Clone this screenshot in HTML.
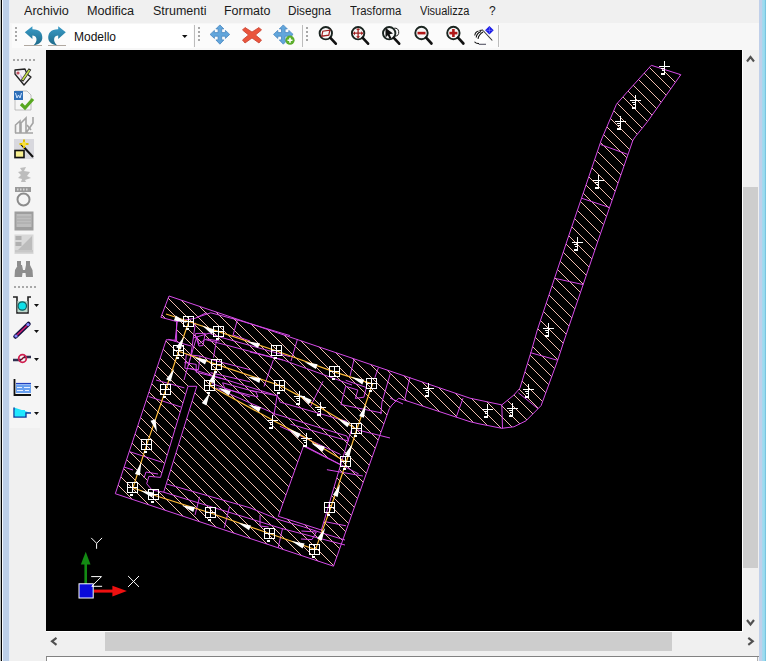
<!DOCTYPE html>
<html><head><meta charset="utf-8">
<style>
*{margin:0;padding:0;box-sizing:border-box}
html,body{width:766px;height:661px;overflow:hidden;background:#f0f0f0;font-family:"Liberation Sans",sans-serif;font-size:12px;color:#000}
.a{position:absolute}
#frameL0{left:0;top:0;width:1px;height:661px;background:#b8bcb8}
#frameL1{left:1px;top:0;width:1px;height:661px;background:#000}
#frameL2{left:2px;top:0;width:1px;height:661px;background:#f4f9ff}
#frameL3{left:3px;top:0;width:6px;height:661px;background:#bccfe8}
#frameL4{left:9px;top:0;width:1px;height:661px;background:#e6eef8}
#menu{left:10px;top:0;width:749px;height:23px;background:#f0f0f0}
.mi{position:absolute;top:4px;font-size:12px;line-height:15px;white-space:nowrap;transform-origin:0 0;color:#1a1a1a}
#tbarea{left:10px;top:23px;width:749px;height:27px;background:#f7f7f7}
#tb{left:12px;top:24px;width:488px;height:24px;background:#fbfbfb}
#ltb{left:10px;top:50px;width:30px;height:378px;background:#f5f5f5}
#canvas{left:46px;top:50px;width:696px;height:581px;background:#000;overflow:hidden}
#frameR1{left:759px;top:0;width:3px;height:661px;background:#c0d0ea}
#frameR2{left:762px;top:0;width:4px;height:661px;background:linear-gradient(90deg,#a8d8ee,#98dcf0 60%,#6ab8d8)}
</style></head><body>
<div class="a" id="frameL0"></div><div class="a" id="frameL1"></div><div class="a" id="frameL2"></div><div class="a" id="frameL3"></div><div class="a" id="frameL4"></div>
<div class="a" id="menu"></div>
<div class="mi" style="left:24px;transform:scaleX(1.05)">Archivio</div><div class="mi" style="left:87px;transform:scaleX(1.055)">Modifica</div><div class="mi" style="left:153px;transform:scaleX(1.04)">Strumenti</div><div class="mi" style="left:224px;transform:scaleX(1.04)">Formato</div><div class="mi" style="left:288px;transform:scaleX(0.98)">Disegna</div><div class="mi" style="left:350px;transform:scaleX(0.945)">Trasforma</div><div class="mi" style="left:420px;transform:scaleX(0.917)">Visualizza</div><div class="mi" style="left:489px">?</div>

<div class="a" id="tbarea"></div>
<div class="a" id="tb"></div>
<div class="a" id="ltb"></div>
<svg class="a" style="left:0;top:0" width="766" height="50" viewBox="0 0 766 50">
<g fill="#a8a8a8"><rect x="15" y="27" width="2" height="2"/><rect x="15" y="31" width="2" height="2"/><rect x="15" y="35" width="2" height="2"/><rect x="15" y="39" width="2" height="2"/>
<rect x="198" y="27" width="2" height="2"/><rect x="198" y="31" width="2" height="2"/><rect x="198" y="35" width="2" height="2"/><rect x="198" y="39" width="2" height="2"/>
<rect x="306" y="27" width="2" height="2"/><rect x="306" y="31" width="2" height="2"/><rect x="306" y="35" width="2" height="2"/><rect x="306" y="39" width="2" height="2"/></g>
<rect x="70" y="24" width="123" height="24" fill="#fff"/>
<line x1="194.5" y1="25" x2="194.5" y2="47" stroke="#bdbdbd"/>
<line x1="302.5" y1="25" x2="302.5" y2="47" stroke="#bdbdbd"/>
<line x1="498.5" y1="25" x2="498.5" y2="47" stroke="#bdbdbd"/>
<defs><linearGradient id="ug" x1="0" y1="0" x2="0" y2="1"><stop offset="0" stop-color="#3a9cc8"/><stop offset="1" stop-color="#1d6a8a"/></linearGradient></defs>
<rect x="24" y="45" width="18" height="1" fill="#b0a8a0"/><rect x="48" y="45" width="18" height="1" fill="#b0a8a0"/>
<path d="M24.8,32.2 L32.4,26.2 L32.4,29.3 C39.8,29.2 42.8,33.4 42.3,38.6 C41.8,42.6 38.2,44.9 33.6,45.3 C35.6,43.2 37,40.6 36.4,38.4 C35.8,36.2 34.4,35.4 32.4,35.4 L32.4,38.9 Z" fill="url(#ug)"/>
<path d="M65.8,32.2 L58.2,26.2 L58.2,29.3 C50.8,29.2 47.8,33.4 48.3,38.6 C48.8,42.6 52.4,44.9 57.0,45.3 C55.0,43.2 53.6,40.6 54.2,38.4 C54.8,36.2 56.2,35.4 58.2,35.4 L58.2,38.9 Z" fill="url(#ug)"/>
<path d="M182,35 H187.5 L184.75,38 Z" fill="#111"/>
<path d="M219.9,24.9 L223.9,28.9 L221.70000000000002,28.9 L221.70000000000002,32.6 L225.4,32.6 L225.4,30.4 L229.70000000000002,34.4 L225.4,38.4 L225.4,36.199999999999996 L221.70000000000002,36.199999999999996 L221.70000000000002,39.9 L223.9,39.9 L219.9,44.2 L215.9,39.9 L218.1,39.9 L218.1,36.199999999999996 L214.4,36.199999999999996 L214.4,38.4 L210.1,34.4 L214.4,30.4 L214.4,32.6 L218.1,32.6 L218.1,28.9 L215.9,28.9 Z" fill="#62a6dc" stroke="#4a88c0" stroke-width="0.8" stroke-linejoin="round"/>
<path d="M245,27.5 L252,32 L259,27.5 L261.5,30 L255.5,35 L261.5,40 L259,43 L252,38 L245,43 L242.5,40 L248.5,35 L242.5,30 Z" fill="#ea553c" stroke="#c84030" stroke-width="0.8" stroke-linejoin="round"/>
<path d="M283.3,24.9 L287.3,28.9 L285.1,28.9 L285.1,32.6 L288.8,32.6 L288.8,30.4 L293.1,34.4 L288.8,38.4 L288.8,36.199999999999996 L285.1,36.199999999999996 L285.1,39.9 L287.3,39.9 L283.3,44.2 L279.3,39.9 L281.5,39.9 L281.5,36.199999999999996 L277.8,36.199999999999996 L277.8,38.4 L273.5,34.4 L277.8,30.4 L277.8,32.6 L281.5,32.6 L281.5,28.9 L279.3,28.9 Z" fill="#62a6dc" stroke="#4a88c0" stroke-width="0.8" stroke-linejoin="round"/>
<circle cx="290" cy="40.2" r="4.6" fill="#5cae2c"/><path d="M287.5,40.2 H292.5 M290,37.7 V42.7" stroke="#fff" stroke-width="1.6"/>
<g><circle cx="325.8" cy="33.2" r="6.2" fill="#f6f6f6" stroke="#1a2420" stroke-width="1.9"/><line x1="330.40000000000003" y1="37.800000000000004" x2="335.8" y2="43.7" stroke="#111" stroke-width="2.6" stroke-linecap="round"/><path d="M321.8,36.2 L322.8,31.200000000000003 L329.8,30.200000000000003 L328.8,35.2 Z" fill="none" stroke="#a02020" stroke-width="1.2"/></g><g><circle cx="358.1" cy="33.2" r="6.2" fill="#f6f6f6" stroke="#1a2420" stroke-width="1.9"/><line x1="362.70000000000005" y1="37.800000000000004" x2="368.1" y2="43.7" stroke="#111" stroke-width="2.6" stroke-linecap="round"/><path d="M354.1,33.2 H362.1 M358.1,29.2 V37.2" stroke="#a02020" stroke-width="1.3"/><path d="M352.8,33.2 L355,31.2 V35.2 Z M363.4,33.2 L361.2,31.2 V35.2 Z M358.1,27.9 L356.1,30.1 H360.1 Z M358.1,38.5 L356.1,36.3 H360.1 Z" fill="#a02020"/></g><g><circle cx="389.2" cy="33.2" r="6.2" fill="#f6f6f6" stroke="#1a2420" stroke-width="1.9"/><line x1="393.8" y1="37.800000000000004" x2="399.2" y2="43.7" stroke="#111" stroke-width="2.6" stroke-linecap="round"/><path d="M385.5,27.8 L393,33.5 L389.6,34.3 L391.5,38.2 L389.6,39 L387.8,35.2 L385.5,37.5 Z" fill="#111"/><path d="M394.2,28.200000000000003 A4,4 0 0 1 395.2,36.2" fill="none" stroke="#222" stroke-width="1"/></g><g><circle cx="421.5" cy="33" r="6.2" fill="#f6f6f6" stroke="#1a2420" stroke-width="1.9"/><line x1="426.1" y1="37.6" x2="431.5" y2="43.5" stroke="#111" stroke-width="2.6" stroke-linecap="round"/><rect x="417.5" y="31.8" width="8" height="2.6" fill="#b01818"/></g><g><circle cx="453.4" cy="33" r="6.2" fill="#f6f6f6" stroke="#1a2420" stroke-width="1.9"/><line x1="458.0" y1="37.6" x2="463.4" y2="43.5" stroke="#111" stroke-width="2.6" stroke-linecap="round"/><rect x="449.4" y="31.8" width="8" height="2.6" fill="#b01818"/><rect x="452.09999999999997" y="29" width="2.6" height="8" fill="#b01818"/></g>
<path d="M475,34 C476,31 480,30 483,30.2 L488.5,37 C488,40 486,43 483,43.5 L479,43.5 L474.5,41.5 C476,40.5 477,40 478,39 C476,38 474.5,36.5 475,34 Z" fill="#fff"/>
<path d="M474.8,35.5 C475,33 476.5,31.5 478.5,31 M476.2,37.5 C476.5,34.5 478.5,32.5 481,31.5 M478,38.8 C478.5,36 480.5,33.5 483,32 M479.5,30.5 L483,30 M474.5,41.8 C475.5,43.3 477,43.6 479,43.6" fill="none" stroke="#111" stroke-width="1.1"/>
<path d="M479,44.3 H486" stroke="#556" stroke-width="1.1"/>
<path d="M483,30.5 L492.3,40.5" stroke="#333" stroke-width="1.1"/>
<path d="M489.4,26 L493.7,30.3 L489.4,34.6 L485.1,30.3 Z" fill="#1818e8"/><path d="M486.4,30.3 H492.4 M489.4,27.3 V33.3" stroke="#8c8cff" stroke-width="0.6"/>
</svg>
<div class="a" style="left:74px;top:30px;font-size:12px;line-height:15px;color:#111">Modello</div>

<div class="a" id="canvas"></div>
<!--CANVAS--><svg class="a" style="left:46px;top:50px" width="696" height="581" viewBox="46 50 696 581">
<defs><clipPath id="hc"><path clip-rule="evenodd" d="M169.0,296.0 L470.0,398.2 L501.8,404.9 L513.9,395.0 L519.9,388.2 L531.3,351.2 L537.3,330.0 L567.3,240.0 L601.3,140.0 L616.5,104.2 L627.8,91.3 L651.3,65.3 L680.8,74.7 L647.5,121.6 L635.4,136.7 L633.0,140.0 L598.3,240.0 L564.3,340.0 L557.7,360.3 L541.1,405.6 L526.0,420.8 L513.9,426.8 L501.8,428.3 L479.0,423.8 L470.0,421.7 L398.7,398.2 L392.0,405.0 L389.3,408.7 L333.5,566.2 L115.3,493.7 L166.3,339.7 L176.6,340.3 L176.6,321.5 L160.9,317.3 Z M188.0,386.3 L196.8,386.3 L163.7,492.2 L152.0,490.0 L146.7,483.7 L148.9,476.3 L160.5,477.4 Z M303.5,446.1 L340.6,464.9 L321.4,530.0 L278.3,516.3 Z"/></clipPath></defs>
<g clip-path="url(#hc)" shape-rendering="crispEdges"><path d="M-644.5,50.5 L-63.5,631.5 M-633.5,50.5 L-52.5,631.5 M-621.5,50.5 L-40.5,631.5 M-610.5,50.5 L-29.5,631.5 M-599.5,50.5 L-18.5,631.5 M-587.5,50.5 L-6.5,631.5 M-576.5,50.5 L4.5,631.5 M-565.5,50.5 L15.5,631.5 M-554.5,50.5 L26.5,631.5 M-542.5,50.5 L38.5,631.5 M-531.5,50.5 L49.5,631.5 M-520.5,50.5 L60.5,631.5 M-508.5,50.5 L72.5,631.5 M-497.5,50.5 L83.5,631.5 M-486.5,50.5 L94.5,631.5 M-474.5,50.5 L106.5,631.5 M-463.5,50.5 L117.5,631.5 M-452.5,50.5 L128.5,631.5 M-441.5,50.5 L139.5,631.5 M-429.5,50.5 L151.5,631.5 M-418.5,50.5 L162.5,631.5 M-407.5,50.5 L173.5,631.5 M-395.5,50.5 L185.5,631.5 M-384.5,50.5 L196.5,631.5 M-373.5,50.5 L207.5,631.5 M-361.5,50.5 L219.5,631.5 M-350.5,50.5 L230.5,631.5 M-339.5,50.5 L241.5,631.5 M-328.5,50.5 L252.5,631.5 M-316.5,50.5 L264.5,631.5 M-305.5,50.5 L275.5,631.5 M-294.5,50.5 L286.5,631.5 M-282.5,50.5 L298.5,631.5 M-271.5,50.5 L309.5,631.5 M-260.5,50.5 L320.5,631.5 M-248.5,50.5 L332.5,631.5 M-237.5,50.5 L343.5,631.5 M-226.5,50.5 L354.5,631.5 M-215.5,50.5 L365.5,631.5 M-203.5,50.5 L377.5,631.5 M-192.5,50.5 L388.5,631.5 M-181.5,50.5 L399.5,631.5 M-169.5,50.5 L411.5,631.5 M-158.5,50.5 L422.5,631.5 M-147.5,50.5 L433.5,631.5 M-135.5,50.5 L445.5,631.5 M-124.5,50.5 L456.5,631.5 M-113.5,50.5 L467.5,631.5 M-102.5,50.5 L478.5,631.5 M-90.5,50.5 L490.5,631.5 M-79.5,50.5 L501.5,631.5 M-68.5,50.5 L512.5,631.5 M-56.5,50.5 L524.5,631.5 M-45.5,50.5 L535.5,631.5 M-34.5,50.5 L546.5,631.5 M-22.5,50.5 L558.5,631.5 M-11.5,50.5 L569.5,631.5 M-0.5,50.5 L580.5,631.5 M10.5,50.5 L591.5,631.5 M22.5,50.5 L603.5,631.5 M33.5,50.5 L614.5,631.5 M44.5,50.5 L625.5,631.5 M56.5,50.5 L637.5,631.5 M67.5,50.5 L648.5,631.5 M78.5,50.5 L659.5,631.5 M90.5,50.5 L671.5,631.5 M101.5,50.5 L682.5,631.5 M112.5,50.5 L693.5,631.5 M123.5,50.5 L704.5,631.5 M135.5,50.5 L716.5,631.5 M146.5,50.5 L727.5,631.5 M157.5,50.5 L738.5,631.5 M169.5,50.5 L750.5,631.5 M180.5,50.5 L761.5,631.5 M191.5,50.5 L772.5,631.5 M203.5,50.5 L784.5,631.5 M214.5,50.5 L795.5,631.5 M225.5,50.5 L806.5,631.5 M236.5,50.5 L817.5,631.5 M248.5,50.5 L829.5,631.5 M259.5,50.5 L840.5,631.5 M270.5,50.5 L851.5,631.5 M282.5,50.5 L863.5,631.5 M293.5,50.5 L874.5,631.5 M304.5,50.5 L885.5,631.5 M316.5,50.5 L897.5,631.5 M327.5,50.5 L908.5,631.5 M338.5,50.5 L919.5,631.5 M349.5,50.5 L930.5,631.5 M361.5,50.5 L942.5,631.5 M372.5,50.5 L953.5,631.5 M383.5,50.5 L964.5,631.5 M395.5,50.5 L976.5,631.5 M406.5,50.5 L987.5,631.5 M417.5,50.5 L998.5,631.5 M429.5,50.5 L1010.5,631.5 M440.5,50.5 L1021.5,631.5 M451.5,50.5 L1032.5,631.5 M462.5,50.5 L1043.5,631.5 M474.5,50.5 L1055.5,631.5 M485.5,50.5 L1066.5,631.5 M496.5,50.5 L1077.5,631.5 M508.5,50.5 L1089.5,631.5 M519.5,50.5 L1100.5,631.5 M530.5,50.5 L1111.5,631.5 M542.5,50.5 L1123.5,631.5 M553.5,50.5 L1134.5,631.5 M564.5,50.5 L1145.5,631.5 M576.5,50.5 L1157.5,631.5 M587.5,50.5 L1168.5,631.5 M598.5,50.5 L1179.5,631.5 M609.5,50.5 L1190.5,631.5 M621.5,50.5 L1202.5,631.5 M632.5,50.5 L1213.5,631.5 M643.5,50.5 L1224.5,631.5 M655.5,50.5 L1236.5,631.5 M666.5,50.5 L1247.5,631.5 M677.5,50.5 L1258.5,631.5 M688.5,50.5 L1269.5,631.5 M700.5,50.5 L1281.5,631.5 M711.5,50.5 L1292.5,631.5 M722.5,50.5 L1303.5,631.5 M734.5,50.5 L1315.5,631.5 M745.5,50.5 L1326.5,631.5" stroke="#eebcae" stroke-width="1" fill="none"/></g>
<g fill="none" stroke="#d64ae8" stroke-width="1">
<path d="M169.0,296.0 L470.0,398.2 L501.8,404.9 L513.9,395.0 L519.9,388.2 L531.3,351.2 L537.3,330.0 L567.3,240.0 L601.3,140.0 L616.5,104.2 L627.8,91.3 L651.3,65.3 L680.8,74.7 L647.5,121.6 L635.4,136.7 L633.0,140.0 L598.3,240.0 L564.3,340.0 L557.7,360.3 L541.1,405.6 L526.0,420.8 L513.9,426.8 L501.8,428.3 L479.0,423.8 L470.0,421.7 L398.7,398.2 L392.0,405.0 L389.3,408.7 L333.5,566.2 L115.3,493.7 L166.3,339.7 L176.6,340.3 L176.6,321.5 L160.9,317.3 Z"/>
<path d="M188.0,386.3 L196.8,386.3 L163.7,492.2 L152.0,490.0 L146.7,483.7 L148.9,476.3 L160.5,477.4 Z"/>
<path d="M303.5,446.1 L340.6,464.9 L321.4,530.0 L278.3,516.3 Z"/>
<path d="M600.5,144.5 L627.7,154.4"/>
<path d="M581.6,198.2 L608.8,207.3"/>
<path d="M556.0,278.6 L583.2,284.6"/>
<path d="M530.5,352.7 L557.7,360.3"/>
<path d="M518.4,392.8 L538.0,408.7"/>
<path d="M501.8,404.9 L502.5,428.3"/>
<path d="M410.0,377.0 L404.8,399.0"/>
<path d="M463.0,398.2 L456.2,417.2"/>
<path d="M148.6,396.5 L181.0,407.0"/>
<path d="M129.7,451.7 L162.2,462.3"/>
<path d="M124.0,467.0 L133.0,470.0"/>
<path d="M176.6,321.5 L195.5,318.2 L206.4,312.7"/>
<path d="M177.4,319.8 L175.0,341.7"/>
<path d="M168.4,339.3 L184.0,344.0 L191.0,346.0"/>
<path d="M196.8,336.6 L188.0,366.0"/>
<path d="M191.3,354.8 L184.0,380.0"/>
<path d="M186.3,354.6 L200.0,356.0 L198.4,369.7 L184.8,368.2 L186.3,354.6"/>
<path d="M200.0,356.0 L215.0,360.6 L250.0,369.7"/>
<path d="M216.6,339.5 L213.5,357.6"/>
<path d="M156.0,380.0 L184.4,387.9"/>
<path d="M184.4,362.5 L196.2,364.4 L196.2,372.2 L227.5,380.0"/>
<path d="M206.0,339.0 L219.7,341.0"/>
<path d="M233.2,335.0 L250.0,341.0"/>
<path d="M210.5,372.7 L250.0,381.8"/>
<path d="M195.4,322.8 L190.8,356.0"/>
<path d="M195.0,334.0 L197.0,333.4 L205.2,333.4 L203.0,345.5 L199.0,346.0 L195.0,334.0"/>
<path d="M193.5,337.9 L209.2,333.2 L220.2,337.1 L290.0,356.7"/>
<path d="M196.6,317.5 L210.8,312.8 L237.4,319.9 L290.0,335.6"/>
<path d="M237.4,319.9 L232.7,336.3"/>
<path d="M197.0,337.0 L199.0,344.0 L205.0,339.5 L283.0,360.0 L352.0,385.0"/>
<path d="M297.5,339.0 L291.0,361.0"/>
<path d="M250.0,352.0 L283.0,360.0"/>
<path d="M354.2,359.0 L350.0,376.0"/>
<path d="M378.4,367.6 L374.8,377.8"/>
<path d="M390.5,373.0 L382.0,402.0 L380.8,414.2"/>
<path d="M390.0,398.0 L403.0,404.0"/>
<path d="M222.6,382.8 L256.0,392.0 L258.0,397.0 L225.0,389.0 L222.6,382.8"/>
<path d="M212.0,383.5 L250.0,397.0"/>
<path d="M216.0,388.0 L275.6,414.1"/>
<path d="M250.0,390.3 L277.4,395.8 L280.2,402.2 L346.9,421.4"/>
<path d="M275.6,414.1 L346.9,436.0 L348.7,441.5"/>
<path d="M277.4,394.0 L273.8,416.0"/>
<path d="M323.0,381.2 L310.3,406.8"/>
<path d="M273.4,359.9 L264.0,386.5"/>
<path d="M190.0,368.5 L273.6,394.6"/>
<path d="M345.7,380.3 L366.3,387.5 L363.9,397.2 L355.4,398.4 L357.8,390.0 L345.7,386.3 L340.9,404.5 L382.0,413.0"/>
<path d="M352.0,428.0 L340.6,464.9"/>
<path d="M358.0,430.0 L390.0,438.0"/>
<path d="M303.6,445.3 L358.6,473.9"/>
<path d="M280.0,426.3 L340.6,454.5"/>
<path d="M290.4,424.2 L347.9,440.9"/>
<path d="M326.9,469.7 L362.9,476.0"/>
<path d="M166.7,484.0 L250.0,507.8 L278.1,519.4 L303.6,526.9 L322.6,533.2 L345.0,540.0"/>
<path d="M163.7,492.2 L250.0,518.7 L280.0,528.0 L345.0,545.0"/>
<path d="M199.6,496.8 L195.0,515.0"/>
<path d="M229.7,506.0 L224.3,527.9"/>
<path d="M282.4,529.0 L278.1,548.0"/>
<path d="M324.7,521.6 L346.0,525.8"/>
<path d="M301.4,531.0 L316.3,532.0 L312.0,539.6 L301.0,539.0"/>
<path d="M260.0,515.0 L260.0,526.0 L268.6,527.0"/>
<path d="M144.0,478.0 L146.0,472.0 L158.0,474.0"/>
</g>
<g fill="none" stroke="#ffbc3a" stroke-width="1.2">
<path d="M166.0,314.0 L188.8,321.5 L218.6,331.6 L277.4,351.2 L334.9,372.1 L372.5,383.9 L356.8,429.3 L346.2,462.3 L330.5,508.3 L315.4,549.6 L270.0,533.8 L211.3,513.3 L154.2,495.3 L133.0,487.9 L146.7,444.6 L165.8,389.5 L178.6,351.2 L188.8,321.5"/>
<path d="M178.6,351.2 L217.0,364.6 L280.5,385.7 L298.8,395.6 L320.0,407.4 L356.8,429.3"/>
<path d="M217.0,364.6 L210.0,385.7"/>
<path d="M210.0,385.7 L272.4,420.0 L306.3,438.1 L346.2,462.3"/>
</g>
<g fill="none" stroke="#fff" stroke-width="1" shape-rendering="crispEdges">
<rect x="183.5" y="316.5" width="10" height="10"/><path d="M184,321.5 H194 M188.5,317 V327" stroke-width="1"/>
<rect x="213.5" y="326.5" width="10" height="10"/><path d="M214,331.5 H224 M218.5,327 V337" stroke-width="1"/>
<rect x="271.5" y="345.5" width="10" height="10"/><path d="M272,350.5 H282 M276.5,346 V356" stroke-width="1"/>
<rect x="329.5" y="366.5" width="10" height="10"/><path d="M330,371.5 H340 M334.5,367 V377" stroke-width="1"/>
<rect x="366.5" y="378.5" width="10" height="10"/><path d="M367,383.5 H377 M371.5,379 V389" stroke-width="1"/>
<rect x="351.5" y="423.5" width="10" height="10"/><path d="M352,428.5 H362 M356.5,424 V434" stroke-width="1"/>
<rect x="340.5" y="456.5" width="10" height="10"/><path d="M341,461.5 H351 M345.5,457 V467" stroke-width="1"/>
<rect x="324.5" y="502.5" width="10" height="10"/><path d="M325,507.5 H335 M329.5,503 V513" stroke-width="1"/>
<rect x="309.5" y="544.5" width="10" height="10"/><path d="M310,549.5 H320 M314.5,545 V555" stroke-width="1"/>
<rect x="264.5" y="528.5" width="10" height="10"/><path d="M265,533.5 H275 M269.5,529 V539" stroke-width="1"/>
<rect x="205.5" y="507.5" width="10" height="10"/><path d="M206,512.5 H216 M210.5,508 V518" stroke-width="1"/>
<rect x="148.5" y="489.5" width="10" height="10"/><path d="M149,494.5 H159 M153.5,490 V500" stroke-width="1"/>
<rect x="127.5" y="482.5" width="10" height="10"/><path d="M128,487.5 H138 M132.5,483 V493" stroke-width="1"/>
<rect x="141.5" y="439.5" width="10" height="10"/><path d="M142,444.5 H152 M146.5,440 V450" stroke-width="1"/>
<rect x="160.5" y="384.5" width="10" height="10"/><path d="M161,389.5 H171 M165.5,385 V395" stroke-width="1"/>
<rect x="173.5" y="345.5" width="10" height="10"/><path d="M174,350.5 H184 M178.5,346 V356" stroke-width="1"/>
<rect x="211.5" y="359.5" width="10" height="10"/><path d="M212,364.5 H222 M216.5,360 V370" stroke-width="1"/>
<rect x="204.5" y="380.5" width="10" height="10"/><path d="M205,385.5 H215 M209.5,381 V391" stroke-width="1"/>
<rect x="274.5" y="380.5" width="10" height="10"/><path d="M275,385.5 H285 M279.5,381 V391" stroke-width="1"/>
</g>
<g fill="#fff" shape-rendering="crispEdges">
<rect x="186" y="328" width="3" height="2"/>
<rect x="216" y="338" width="3" height="2"/>
<rect x="274" y="357" width="3" height="2"/>
<rect x="332" y="378" width="3" height="2"/>
<rect x="369" y="390" width="3" height="2"/>
<rect x="354" y="435" width="3" height="2"/>
<rect x="343" y="468" width="3" height="2"/>
<rect x="327" y="514" width="3" height="2"/>
<rect x="312" y="556" width="3" height="2"/>
<rect x="267" y="540" width="3" height="2"/>
<rect x="208" y="519" width="3" height="2"/>
<rect x="151" y="501" width="3" height="2"/>
<rect x="130" y="494" width="3" height="2"/>
<rect x="144" y="451" width="3" height="2"/>
<rect x="163" y="396" width="3" height="2"/>
<rect x="176" y="357" width="3" height="2"/>
<rect x="214" y="371" width="3" height="2"/>
<rect x="207" y="392" width="3" height="2"/>
<rect x="277" y="392" width="3" height="2"/>
</g>
<g stroke="#fff" stroke-width="1" fill="none" shape-rendering="crispEdges">
<path d="M659,66.5 H670 M664.5,61 V73 M661,68.5 H664 M662,70.5 H664"/>
<path d="M630,100.5 H641 M635.5,95 V107 M632,102.5 H635 M633,104.5 H635"/>
<path d="M615,121.5 H626 M620.5,116 V128 M617,123.5 H620 M618,125.5 H620"/>
<path d="M593,180.5 H604 M598.5,175 V187 M595,182.5 H598 M596,184.5 H598"/>
<path d="M572,242.5 H583 M577.5,237 V249 M574,244.5 H577 M575,246.5 H577"/>
<path d="M543,328.5 H554 M548.5,323 V335 M545,330.5 H548 M546,332.5 H548"/>
<path d="M523,389.5 H534 M528.5,384 V396 M525,391.5 H528 M526,393.5 H528"/>
<path d="M507,408.5 H518 M512.5,403 V415 M509,410.5 H512 M510,412.5 H512"/>
<path d="M482,409.5 H493 M487.5,404 V416 M484,411.5 H487 M485,413.5 H487"/>
<path d="M423,388.5 H434 M428.5,383 V395 M425,390.5 H428 M426,392.5 H428"/>
<path d="M294,396.5 H305 M299.5,391 V403 M296,398.5 H299 M297,400.5 H299"/>
<path d="M315,407.5 H326 M320.5,402 V414 M317,409.5 H320 M318,411.5 H320"/>
<path d="M267,420.5 H278 M272.5,415 V427 M269,422.5 H272 M270,424.5 H272"/>
<path d="M301,438.5 H312 M306.5,433 V445 M303,440.5 H306 M304,442.5 H306"/>
</g><g fill="#fff" shape-rendering="crispEdges">
<rect x="661" y="73" width="4" height="2"/>
<rect x="632" y="107" width="4" height="2"/>
<rect x="617" y="128" width="4" height="2"/>
<rect x="595" y="187" width="4" height="2"/>
<rect x="574" y="249" width="4" height="2"/>
<rect x="545" y="335" width="4" height="2"/>
<rect x="525" y="396" width="4" height="2"/>
<rect x="509" y="415" width="4" height="2"/>
<rect x="484" y="416" width="4" height="2"/>
<rect x="425" y="395" width="4" height="2"/>
<rect x="296" y="403" width="4" height="2"/>
<rect x="317" y="414" width="4" height="2"/>
<rect x="269" y="427" width="4" height="2"/>
<rect x="303" y="445" width="4" height="2"/>
</g>
<g fill="#fff">
<path d="M186.91150921638814,322.72348859439137 L173.9,320.4 L175.7,315.6 Z"/>
<path d="M201.98957099526064,325.41772975868514 L214.5,329.8 L211.9,334.2 Z"/>
<path d="M246.75520909519506,341.3336404525502 L259.9,343.3 L258.1,348.1 Z"/>
<path d="M304.57440294964874,361.9127944175113 L317.6,364.2 L315.8,369.0 Z"/>
<path d="M351.32288087898036,377.04543596727615 L364.3,379.7 L362.3,384.5 Z"/>
<path d="M183.99204392397934,336.61706939946254 L180.9,349.5 L176.1,347.3 Z"/>
<path d="M174.26471837448344,368.7980571287393 L170.7,381.6 L166.1,379.2 Z"/>
<path d="M157.04350778539015,432.35516267758095 L150.5,420.8 L155.5,419.2 Z"/>
<path d="M141.22311603488777,462.37487288661464 L139.9,475.6 L134.9,474.0 Z"/>
<path d="M140.6820384086411,490.8445430776139 L153.8,492.5 L152.2,497.5 Z"/>
<path d="M181.74483732241904,505.5564922146099 L194.9,507.1 L193.3,512.1 Z"/>
<path d="M238.10299391824987,522.6596520830387 L251.0,525.5 L249.0,530.3 Z"/>
<path d="M291.55345924930805,541.11319573321 L304.6,543.6 L302.6,548.4 Z"/>
<path d="M366.0111154632967,404.607796045144 L363.9,417.7 L359.1,415.9 Z"/>
<path d="M352.2565650860468,444.0101504006083 L349.4,457.0 L344.6,454.8 Z"/>
<path d="M340.18680426679015,484.05345924930805 L337.7,497.1 L332.9,495.1 Z"/>
<path d="M325.21377674149943,527.9724465170011 L321.7,540.8 L317.1,538.4 Z"/>
<path d="M194.00646159711417,357.18452030424777 L207.0,359.8 L205.0,364.6 Z"/>
<path d="M247.548258292125,376.6644774876375 L260.7,377.9 L259.3,382.9 Z"/>
<path d="M299.66648007570177,394.7214804928013 L311.8,400.1 L308.8,404.3 Z"/>
<path d="M337.4634716097781,418.5623834820527 L350.0,422.9 L347.4,427.3 Z"/>
<path d="M216.09292333325024,370.17661472243685 L213.8,383.2 L209.0,381.4 Z"/>
<path d="M209.91377674149945,392.5724465170011 L206.4,405.4 L201.8,403.0 Z"/>
<path d="M218.03032106269697,387.47124852168764 L230.8,390.9 L228.6,395.5 Z"/>
<path d="M248.1029939182499,404.45965208303863 L261.0,407.3 L259.0,412.1 Z"/>
<path d="M288.56822070166675,428.8116373747425 L300.8,433.8 L298.0,438.2 Z"/>
<path d="M311.4469482379212,443.03750187589515 L324.3,446.5 L321.9,451.1 Z"/>
<path d="M312.04515270074165,443.7411342756606 L324.9,447.2 L322.5,451.8 Z"/>
</g>
<g>
<path d="M91.2,537.9 L96.6,543.3 L102.1,537.9 M96.6,543.3 V548.8" stroke="#fff" stroke-width="1" fill="none"/>
<path d="M85.7,562 V584" stroke="#138a13" stroke-width="2.6"/><path d="M80.9,564.5 L85.7,551.8 L90.5,564.5 Z" fill="#138a13"/>
<rect x="79" y="583.8" width="14.2" height="14.2" fill="#0a0ad8" stroke="#fff" stroke-width="1"/>
<path d="M94,591.1 H113" stroke="#ee1010" stroke-width="3"/><path d="M112.4,585.7 L126.9,591.1 L112.4,596.5 Z" fill="#ee1010"/>
<path d="M91.2,576.6 H101.5 L91.8,586.3 H102.1" stroke="#fff" fill="none" stroke-width="1"/>
<path d="M128.1,576 L139,586.9 M139,576 L128.1,586.9" stroke="#fff" fill="none" stroke-width="1"/>
</g>
</svg><!--/CANVAS-->
<svg class="a" style="left:0;top:50px" width="46" height="390" viewBox="0 50 46 390">
<g fill="#a8a8a8"><rect x="13" y="59" width="2" height="2"/><rect x="17" y="59" width="2" height="2"/><rect x="21" y="59" width="2" height="2"/><rect x="25" y="59" width="2" height="2"/><rect x="29" y="59" width="2" height="2"/><rect x="33" y="59" width="2" height="2"/>
<rect x="14" y="286" width="2" height="2"/><rect x="18" y="286" width="2" height="2"/><rect x="22" y="286" width="2" height="2"/><rect x="26" y="286" width="2" height="2"/><rect x="30" y="286" width="2" height="2"/><rect x="34" y="286" width="2" height="2"/></g>
<!-- icon1: shape with pencil -->
<path d="M15,70 L15,74 L24,85 L31,77 L27,74 L25,69 Z" fill="#f4f0f4" stroke="#222" stroke-width="1.3" stroke-linejoin="round"/>
<circle cx="18" cy="73" r="1.6" fill="#c05060"/><path d="M20,74 L23,78 L21,79 Z" fill="#c8a8e0"/>
<path d="M22,81 L30,69" stroke="#222" stroke-width="3"/><path d="M22.5,80 L29.5,70" stroke="#c8e050" stroke-width="1.6"/>
<!-- icon2: doc with W and check -->
<path d="M15,91 H27 L31,95 V110 H15 Z" fill="#f6f6f6" stroke="#b0b0b0" stroke-width="0.8"/>
<rect x="14" y="91" width="9" height="9" fill="#2e6fb8"/><path d="M15.5,93 L17,98 L18.5,95 L20,98 L21.5,93" fill="none" stroke="#cfe4ff" stroke-width="1"/>
<path d="M21,104 L25,108 L33,99" fill="none" stroke="#58a820" stroke-width="3.2"/>
<!-- icon3: gray chart -->
<g fill="none" stroke="#a4a4a4" stroke-width="1.6"><path d="M15.5,133 V125 L20,121 V133 M21,133 V123 L26,118 V133 M26,133 L33,123 V117 M15,133 H33"/><path d="M27,125 L31,130"/></g>
<!-- icon4: magic wand -->
<rect x="14" y="139" width="20" height="20" fill="#d8d8de"/>
<path d="M21,144 L33,157" stroke="#111" stroke-width="2"/>
<path d="M24,139.5 V148 M19.5,144 H28.5" stroke="#e0c000" stroke-width="2"/><circle cx="24" cy="144" r="2.2" fill="#f8e040"/>
<rect x="15" y="150.5" width="9" height="7" fill="#f8f090" stroke="#111" stroke-width="1.6"/>
<!-- icon5: gray tree -->
<g fill="#bdbdbd"><path d="M20,168 L26,167 L24,171 L30,172 L27,176 L31,178 L25,180 L26,182 L21,182 L22,179 L18,178 L21,175 L18,172 L22,171 Z"/></g>
<!-- icon6: bar + circle -->
<rect x="15" y="187" width="16" height="5" fill="#9a9a9a"/><g fill="#d4d4d4"><rect x="17" y="188.5" width="1.5" height="2"/><rect x="20" y="188.5" width="1.5" height="2"/><rect x="23" y="188.5" width="1.5" height="2"/><rect x="26" y="188.5" width="1.5" height="2"/></g>
<circle cx="23.5" cy="199.5" r="6" fill="none" stroke="#8c8c8c" stroke-width="2"/>
<!-- icon7: gray panel -->
<rect x="14.5" y="211.5" width="19" height="19" fill="#9e9e9e"/><rect x="16.5" y="214" width="15" height="13" fill="#bdbdbd"/><path d="M17,217 H31 M17,220 H31 M17,223 H31" stroke="#a8a8a8" stroke-width="1"/>
<!-- icon8 -->
<rect x="14.5" y="234.5" width="19" height="19.5" fill="#d8d8d8"/><path d="M16,252 L32,236 V252 Z" fill="#bcbcbc"/><rect x="15.5" y="236" width="6" height="4" fill="#b0b0b0"/><rect x="15.5" y="242" width="6" height="4" fill="#b0b0b0"/><rect x="15" y="250" width="18" height="2.5" fill="#c8c8c8"/>
<!-- icon9 binoculars -->
<g fill="#8e8e8e"><rect x="17" y="261" width="4" height="5"/><rect x="26" y="261" width="4" height="5"/><path d="M14.5,277 L15,270 L18,265 H22 L23,270 H25 L26,265 H30 L32.5,270 L33,277 H26 L25.5,273 H22.5 L22,277 Z"/></g>
<!-- tank icon -->
<path d="M13,297 H17 V313 H28 V297 H31" fill="none" stroke="#222" stroke-width="1.6"/><rect x="17.5" y="301" width="10" height="11" fill="#bcd8cc"/>
<circle cx="22.3" cy="306" r="4.2" fill="#10e0e8" stroke="#106060" stroke-width="1.2"/>
<path d="M34,304 H39 L36.5,307 Z" fill="#111"/>
<!-- pipe icon -->
<path d="M15.5,336.5 L28.5,324" stroke="#101040" stroke-width="4.5" stroke-linecap="round"/><path d="M17,335 L27,325.5" stroke="#d02070" stroke-width="1.6"/><circle cx="16" cy="336" r="1.6" fill="#8888ff"/><circle cx="28" cy="324.5" r="1.6" fill="#8888ff"/>
<path d="M34,330 H39 L36.5,333 Z" fill="#111"/>
<!-- pump icon -->
<path d="M13,360 H21 M24,357 H31" stroke="#303050" stroke-width="2.4"/><circle cx="22.5" cy="358.5" r="3.8" fill="none" stroke="#d02050" stroke-width="1.8"/><path d="M21,360 L24,357" stroke="#800020" stroke-width="1.4"/>
<path d="M34,358 H39 L36.5,361 Z" fill="#111"/>
<!-- water level -->
<path d="M14.5,379 V395 H31" fill="none" stroke="#111" stroke-width="1.8"/><rect x="16" y="383" width="15" height="10" fill="#68a0f0"/><path d="M16,384 H31 M17,387.5 H22 M24,387.5 H30 M17,390.5 H23 M25,390.5 H29" stroke="#e8f0ff" stroke-width="1"/><path d="M16,383.5 H31" stroke="#2040c0" stroke-width="1.2"/>
<path d="M34,386 H39 L36.5,389 Z" fill="#111"/>
<!-- channel -->
<path d="M14,407.5 V417 H26 V413 H31" fill="#20e0f8" stroke="#1040a0" stroke-width="1.4"/><path d="M14.8,410 H25 V416.3 H14.8 Z" fill="#20e8ff"/>
<path d="M34,412 H39 L36.5,415 Z" fill="#111"/>
</svg>

<!-- scrollbars -->
<div class="a" style="left:742px;top:50px;width:1px;height:582px;background:#fff"></div>
<div class="a" style="left:46px;top:631px;width:697px;height:1px;background:#fff"></div>
<div class="a" style="left:743px;top:50px;width:16px;height:582px;background:#f0f0f0"></div>
<div class="a" style="left:743px;top:187px;width:15px;height:381px;background:#cdcdcd"></div>
<div class="a" style="left:46px;top:632px;width:713px;height:24px;background:#f0f0f0"></div>
<div class="a" style="left:105px;top:632px;width:567px;height:19px;background:#cdcdcd"></div>
<div class="a" style="left:46px;top:656px;width:713px;height:1px;background:#828282"></div>
<div class="a" style="left:46px;top:657px;width:712px;height:4px;background:#fff;border-left:1px solid #8a8a8a;border-right:1px solid #b0b0b0"></div>
<svg class="a" style="left:0;top:0" width="766" height="661" viewBox="0 0 766 661">
<g fill="none" stroke="#505050" stroke-width="2.1">
<path d="M747,61.5 L750.5,57 L754,61.5"/>
<path d="M747,620 L750.5,624.5 L754,620"/>
<path d="M56.5,637.8 L52,641.3 L56.5,644.8"/>
<path d="M748.3,637.8 L752.8,641.3 L748.3,644.8"/>
</g></svg>
<div class="a" id="frameR1"></div><div class="a" id="frameR2"></div>
</body></html>
